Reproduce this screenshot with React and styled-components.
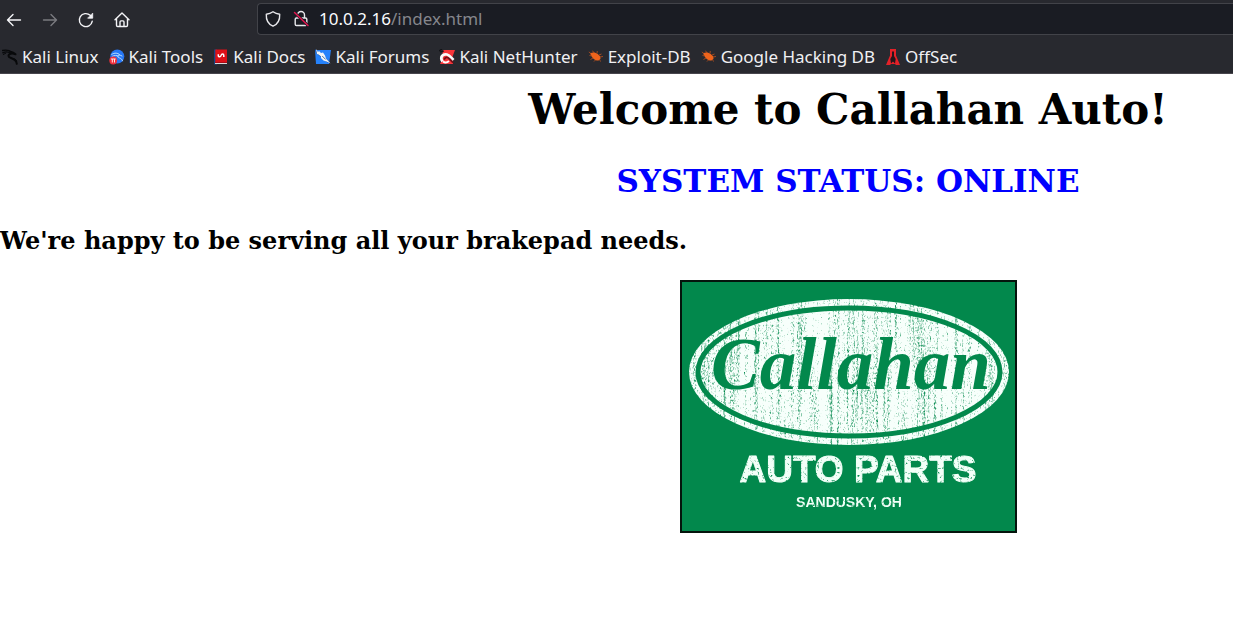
import React from "react";
import styled, { createGlobalStyle } from "styled-components";

const GlobalStyle = createGlobalStyle`
  body {
    margin: 0;
    background: #ffffff;
    color: #000000;
  }
`;

const Chrome = styled.header`
  background: #28292f;
  border-bottom: 1px solid #47454c;
  color: #fbfbfe;
  font-family: "Noto Sans", sans-serif;
  font-size: 17px;
  overflow: hidden;
`;

const Toolbar = styled.div`
  display: flex;
  align-items: center;
  height: 40px;
  padding-left: 4px;
  box-sizing: border-box;
`;

const NavButtons = styled.nav`
  display: flex;
  gap: 16px;
  flex: none;
  margin-right: 125px;
`;

const NavButton = styled.button`
  display: flex;
  width: 20px;
  height: 20px;
  padding: 0;
  border: 0;
  background: transparent;
  color: #f4f4f7;
  opacity: ${(p) => (p.disabled ? 0.4 : 1)};
`;

const UrlBar = styled.form`
  display: flex;
  align-items: center;
  flex: 1;
  height: 32px;
  margin-bottom: 2px;
  padding-left: 5px;
  box-sizing: border-box;
  background: #1a1c23;
  border: 1px solid #424349;
  border-right: 0;
  border-radius: 4px 0 0 4px;
`;

const UrlIcon = styled.span`
  display: flex;
  width: 20px;
  margin-right: 8px;
  color: #e8e8ec;
`;

const Address = styled.a`
  color: #85868c;
  line-height: 24px;
  text-decoration: none;
`;

const Host = styled.span`
  color: #fbfbfe;
`;

const Bookmarks = styled.ul`
  display: flex;
  gap: 10px;
  height: 33px;
  margin: 0;
  padding: 0 0 0 2px;
  list-style: none;
  white-space: nowrap;
`;

const Bookmark = styled.a`
  display: flex;
  align-items: center;
  gap: 4px;
  height: 33px;
  color: #f0f0f3;
  line-height: 24px;
  text-decoration: none;

  svg {
    flex: none;
  }
`;

const Page = styled.main`
  display: flow-root;
  font-family: "DejaVu Serif", serif;
  font-weight: bold;
`;

const Centered = styled.div`
  padding-left: 463px;
  text-align: center;
  white-space: nowrap;
`;

const Title = styled.h1`
  margin: 0;
  padding-top: 11px;
  font-size: 42px;
  line-height: 50px;
`;

const Status = styled.h2`
  margin: 27px 0 0;
  color: #0000ff;
  font-size: 31px;
  line-height: 38px;
`;

const Message = styled.h3`
  margin: 26px 0 0;
  font-size: 24px;
  line-height: 30px;
`;

const Logo = styled.svg`
  display: block;
  width: 337px;
  height: 253px;
  margin: 24px auto 0;
`;

const Icon = ({ children, size = 20 }) => (
  <svg
    width={size}
    height={size}
    viewBox="0 0 20 20"
    fill="none"
    stroke="currentColor"
    strokeWidth="1.4"
    strokeLinecap="round"
    strokeLinejoin="round"
    aria-hidden="true"
  >
    {children}
  </svg>
);

const Favicon = ({ children }) => (
  <svg width="16" height="16" viewBox="0 0 16 16" aria-hidden="true">
    {children}
  </svg>
);

const KaliDragon = () => (
  <Favicon>
    <g fill="none" stroke="#08090b" strokeLinecap="round" strokeLinejoin="round">
      <path strokeWidth="1.4" d="M.5 1.500C4 .8 7.500 1.300 9.500 3.200M.8 3.800C3.500 2.500 6.500 2.800 8.700 4.500" />
      <path strokeWidth="2" d="M8.500 2.800c2.200.3 3.500 1 5 2.500M13.500 5.300c-3.500-1.300-7-.8-7 1.700 0 2.800 7.500 1 8.300 7.800" />
      <path strokeWidth="1" d="M1.300 5.500l2.500-1.300M11 9.500c1.500.1 3 1 3.800 2.300" />
    </g>
  </Favicon>
);

const KaliTools = () => (
  <Favicon>
    <circle cx="8.3" cy="7.5" r="7" fill="#2777f5" />
    <path
      d="M2.800 5.300c3-1.800 5.800-1.500 7.800.3M3.500 7.200c2-1 4.300-1 6-.1M13 7c-2.500-1.600-5-.8-4.300.8.7 1.400 4 .8 4.800 4"
      fill="none"
      stroke="#b8dcff"
      strokeWidth="1"
      strokeLinecap="round"
    />
    <circle cx="4.2" cy="11.5" r="3.9" fill="#ee2f3c" />
    <path d="M1.900 10h4.800M3.300 10v3.500M5.500 10v3.500" stroke="#ffe8e8" strokeWidth="1" fill="none" />
  </Favicon>
);

const KaliDocs = () => (
  <Favicon>
    <path fill="#174485" d="M1 .5h3v15H1z" />
    <path fill="#dd1018" d="M2.300.5H14v13H2.300z" />
    <path fill="#a70c16" d="M2 13h12v1H2z" />
    <path fill="#d9d9dc" d="M2 14h12v1H2z" />
    <path
      d="M5.300 5.200v1.200c0 2 2.300 1.800 2.800 0s2.700-1.800 2.700 0v1.500"
      fill="none"
      stroke="#fff"
      strokeWidth="1.5"
    />
  </Favicon>
);

const KaliForums = () => (
  <Favicon>
    <path fill="#2582fb" d="M0 1h16l-2 14H1z" />
    <path fill="#174ea0" d="M0 0l15 13-2 1L1 4z" />
    <path fill="#f1f4f6" d="M1 0l2 3 1-1 2 2 2-.5 2 3 1 3 4.500 5-4-2-3-1-2.500-2.500V7.500L3.500 5.500 2 5z" />
    <path d="M7.200 7l3.500 3.500" stroke="#25588e" strokeWidth=".8" />
  </Favicon>
);

const KaliNetHunter = () => (
  <Favicon>
    <path fill="#f8353a" d="M4 1h12l-3 8 1 6H1l2-4z" />
    <path
      d="M3.500 12.500C.5 8 4 4.500 8 5.500c2.500.6 4 3 6.500 5.500"
      fill="none"
      stroke="#fafafa"
      strokeWidth="2.8"
    />
    <path d="M5 10.500l1.500-1.700c1.500-1 2.500-.3 4 1.200l3.500 3.700" fill="none" stroke="#73111a" strokeWidth="1.8" />
    <path d="M4 12.500c2 1.500 4 1.300 6-.5" fill="none" stroke="#fff" strokeWidth="1.8" />
    <path d="M0 2l3-2M1 3l4-1" stroke="#101115" strokeWidth="1.2" />
  </Favicon>
);

const Bug = () => (
  <Favicon>
    <path fill="#ef641c" d="M2 4.500C4.500 2.800 7.500 3.200 10 5.200l2.200 2.300.3 2.500-2 1.500C8 12 4.500 9.500 3.500 7z" />
    <path
      d="M6 4L4.500 1.700M9 4.500l.3-2.500M11 6l2.500-1M12 8l3-.5M4 7L1.500 6.500M5 9l-2.500 1.500M7.500 11L6 12.500M11.500 10.500l1 2M2.500 4L.8 3"
      stroke="#bf521c"
      strokeWidth=".8"
      fill="none"
    />
  </Favicon>
);

const OffSecMark = () => (
  <Favicon>
    <path fill="#e32128" d="M5 0h6v6.500L15 16h-4l-1-1H6l-1 1H1l4-9.500z" />
    <path fill="#24161b" d="M7 2.500h2V7l1.700 3-.7 4.500-2-2-2 2-.7-4.500L7 7z" />
  </Favicon>
);

const BOOKMARKS = [
  ["Kali Linux", KaliDragon],
  ["Kali Tools", KaliTools],
  ["Kali Docs", KaliDocs],
  ["Kali Forums", KaliForums],
  ["Kali NetHunter", KaliNetHunter],
  ["Exploit-DB", Bug],
  ["Google Hacking DB", Bug],
  ["OffSec", OffSecMark],
];

const CallahanLogo = () => (
  <Logo viewBox="0 0 337 253" role="img" aria-label="Callahan Auto Parts, Sandusky, OH">
    <defs>
      {/* Worn-paint effect: vertical streaks broken up by fine specks. */}
      <filter id="worn" x="0" y="0" width="337" height="253" filterUnits="userSpaceOnUse">
        <feTurbulence type="fractalNoise" baseFrequency="0.28 0.006" numOctaves="2" seed="8" result="streaks" />
        <feTurbulence type="fractalNoise" baseFrequency="0.7 0.4" numOctaves="2" seed="3" result="specks" />
        <feComposite in="streaks" in2="specks" operator="arithmetic" k2="0.45" k3="0.55" result="mix" />
        <feColorMatrix in="mix" type="matrix" values="0 0 0 0 0  0 0 0 0 0  0 0 0 0 0  4 0 0 0 -0.9" result="paint" />
        <feComposite in="SourceGraphic" in2="paint" operator="in" />
      </filter>
      <filter id="chipped" x="0" y="0" width="337" height="253" filterUnits="userSpaceOnUse">
        <feTurbulence type="fractalNoise" baseFrequency="0.4" numOctaves="2" seed="5" />
        <feColorMatrix type="matrix" values="0 0 0 0 0  0 0 0 0 0  0 0 0 0 0  4 0 0 0 -0.6" result="paint" />
        <feComposite in="SourceGraphic" in2="paint" operator="in" />
      </filter>
    </defs>
    <rect x="1" y="1" width="335" height="251" fill="#02884c" stroke="#04140c" strokeWidth="2" />
    <g filter="url(#worn)">
      <ellipse cx="169" cy="92" rx="160" ry="73" fill="#f7fffb" />
    </g>
    <ellipse cx="169" cy="92" rx="151" ry="64" fill="none" stroke="#02884c" strokeWidth="5" />
    <text
      x="31"
      y="109"
      fill="#02884c"
      fontFamily="Liberation Serif, serif"
      fontSize="73"
      fontStyle="italic"
      fontWeight="bold"
    >
      Callahan
    </text>
    <g
      filter="url(#chipped)"
      fill="#f2fff8"
      textAnchor="middle"
      fontFamily="Liberation Sans, sans-serif"
      fontWeight="bold"
    >
      <text x="178" y="202" fontSize="37" stroke="#f2fff8" strokeWidth="1" strokeLinejoin="round">
        AUTO PARTS
      </text>
      <text x="169" y="227" fontSize="14">
        SANDUSKY, OH
      </text>
    </g>
  </Logo>
);

export default function App() {
  return (
    <>
      <GlobalStyle />
      <Chrome>
        <Toolbar>
          <NavButtons aria-label="Browser">
            <NavButton type="button" aria-label="Back">
              <Icon>
                <path d="M16.500 10H3.500M9 4.500L3.500 10l5.500 5.500" />
              </Icon>
            </NavButton>
            <NavButton type="button" aria-label="Forward" disabled>
              <Icon>
                <path d="M3.500 10h13M11 4.500l5.500 5.500-5.500 5.500" />
              </Icon>
            </NavButton>
            <NavButton type="button" aria-label="Reload">
              <Icon>
                <path d="M16.200 11.300a6.500 6.500 0 1 1-2-6l1.300 1.300" />
                <path d="M16.700 3.500v4.700H12z" fill="currentColor" strokeWidth=".8" />
              </Icon>
            </NavButton>
            <NavButton type="button" aria-label="Home">
              <Icon>
                <path d="M3 9.800L10 3l7 6.800M4.500 8.500v6.800c0 .8.500 1.200 1.200 1.200h8.600c.7 0 1.200-.4 1.200-1.200V8.500" />
                <path d="M8 16.200v-4.300c0-.6.400-1 1-1h2c.6 0 1 .4 1 1v4.300" />
              </Icon>
            </NavButton>
          </NavButtons>
          <UrlBar>
            <UrlIcon>
              <Icon>
                <path d="M10 2.800c2.200 1.600 4.200 2.200 6.700 2.400.3 5.500-1.700 9.800-6.700 12-5-2.200-7-6.500-6.700-12C5.800 5 7.800 4.400 10 2.800z" />
              </Icon>
            </UrlIcon>
            <UrlIcon>
              <Icon>
                <path d="M6.500 9V6a3.500 3.500 0 0 1 7 0v3M5.500 9h9c.8 0 1.300.5 1.300 1.300v4.900c0 .8-.5 1.300-1.300 1.300h-9c-.8 0-1.300-.5-1.300-1.300v-4.900C4.200 9.500 4.700 9 5.500 9z" />
                <path d="M3.500 3.500l13.500 13" stroke="#1a1c23" strokeWidth="3" />
                <path d="M3.500 3.500l13.500 13" stroke="#e3154f" strokeWidth="1.5" />
              </Icon>
            </UrlIcon>
            <Address href="#">
              <Host>10.0.2.16</Host>/index.html
            </Address>
          </UrlBar>
        </Toolbar>
        <Bookmarks>
          {BOOKMARKS.map(([label, Mark]) => (
            <li key={label}>
              <Bookmark href="#">
                <Mark />
                {label}
              </Bookmark>
            </li>
          ))}
        </Bookmarks>
      </Chrome>
      <Page>
        <Centered>
          <Title>Welcome to Callahan Auto!</Title>
          <Status>SYSTEM STATUS: ONLINE</Status>
        </Centered>
        <Message>We're happy to be serving all your brakepad needs.</Message>
        <Centered>
          <CallahanLogo />
        </Centered>
      </Page>
    </>
  );
}
